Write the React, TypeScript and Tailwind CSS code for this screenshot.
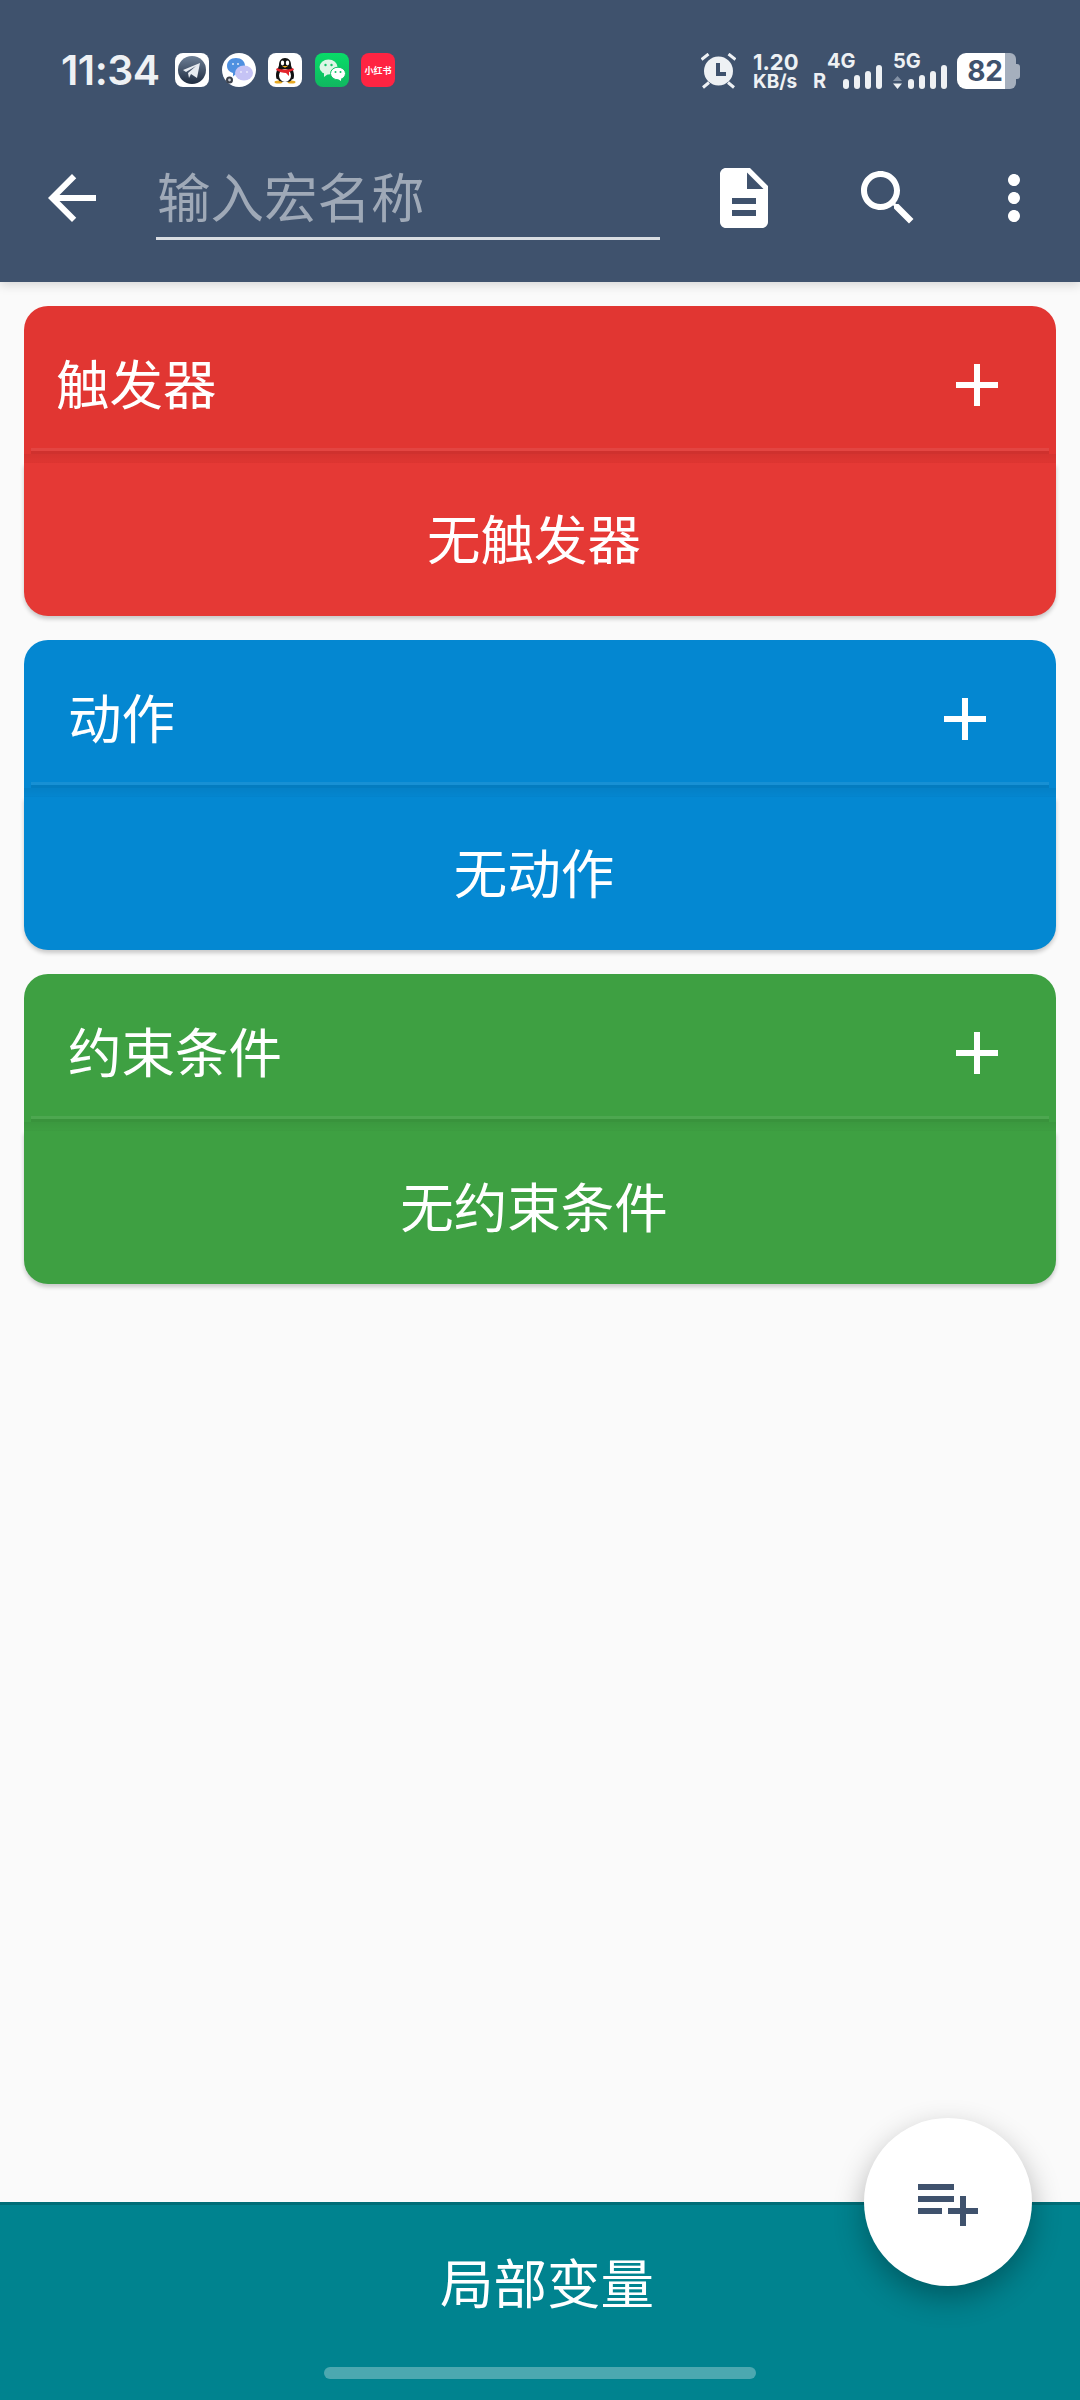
const sections = [
  {
    title: "触发器",
    empty: "无触发器",
    head: "bg-[#e13632]",
    body: "bg-[#e53935]",
    pad: "pl-[32px] pr-[43px]",
  },
  {
    title: "动作",
    empty: "无动作",
    head: "bg-[#0487d1]",
    body: "bg-[#0488d2]",
    pad: "pl-[44px] pr-[55px]",
  },
  {
    title: "约束条件",
    empty: "无约束条件",
    head: "bg-[#3ea042]",
    body: "bg-[#3ea042]",
    pad: "pl-[44px] pr-[43px]",
  },
];

function MaterialIcon({ d, className }: { d: string; className?: string }) {
  return (
    <svg viewBox="0 0 24 24" className={`w-[72px] h-[72px] shrink-0 ${className ?? "fill-white"}`}>
      <path d={d} />
    </svg>
  );
}

function TelegramIcon() {
  return (
    <svg viewBox="0 0 34 34" className="w-[34px] h-[34px]">
      <defs>
        <linearGradient id="tg" x1="0" y1="0" x2="0" y2="1">
          <stop offset="0" stopColor="#6d7f96" />
          <stop offset="1" stopColor="#1f2c40" />
        </linearGradient>
      </defs>
      <rect width="34" height="34" rx="8" fill="#fff" />
      <circle cx="17" cy="17" r="14" fill="url(#tg)" />
      <path d="M8 17 25 10 22 25 16 21 14 25 13 20 21 13 11 19Z" fill="#e8ecf1" />
    </svg>
  );
}

function ChatIcon() {
  return (
    <svg viewBox="0 0 34 34" className="w-[34px] h-[34px]">
      <circle cx="17" cy="17" r="17" fill="#fff" />
      <path d="M14 5c5.500 0 9 3.500 9 8s-3.500 8-9 8l-3 2.500V20c-3.500-1-6-3.500-6-7 0-4.500 3.500-8 9-8Z" fill="#4f90e0" />
      <circle cx="11" cy="11" r="1" fill="#dbe8fa" />
      <circle cx="16" cy="11" r="1" fill="#dbe8fa" />
      <ellipse cx="22" cy="20" rx="9" ry="7.500" fill="#c5c3f5" />
      <circle cx="19" cy="19" r="0.900" fill="#eeedfd" />
      <circle cx="25" cy="19" r="0.900" fill="#eeedfd" />
      <circle cx="7.500" cy="27" r="3.500" fill="#3a3f4a" />
      <circle cx="7.500" cy="27" r="1.400" fill="#c9ccd2" />
    </svg>
  );
}

function QQIcon() {
  return (
    <svg viewBox="0 0 34 34" className="w-[34px] h-[34px]">
      <rect width="34" height="34" rx="8" fill="#fff" />
      <ellipse cx="10.500" cy="29" rx="4" ry="1.600" fill="#e8a921" />
      <ellipse cx="23.500" cy="29" rx="4" ry="1.600" fill="#e8a921" />
      <path d="M17 5c4 0 6 3 6 7 0 2 3 6 3 10 0 4-1 5-2 4-1 3-4 3-7 3s-6 0-7-3c-1 1-2 0-2-4 0-4 3-8 3-10 0-4 2-7 6-7Z" fill="#111" />
      <ellipse cx="17" cy="22.500" rx="6" ry="6.500" fill="#fff" />
      <path d="M9 15c5 2 11 2 16 0l1 2-5 2v4l-3-3c-3 0-7-1-10-3Z" fill="#e3242b" />
      <ellipse cx="14.500" cy="10" rx="1.700" ry="2.400" fill="#fff" />
      <ellipse cx="19.500" cy="10" rx="1.700" ry="2.400" fill="#fff" />
      <path d="M14 13h6l-3 1.800Z" fill="#f2b322" />
    </svg>
  );
}

function WeChatIcon() {
  return (
    <svg viewBox="0 0 34 34" className="w-[34px] h-[34px]">
      <defs>
        <linearGradient id="wx" x1="0" y1="0" x2="0" y2="1">
          <stop offset="0" stopColor="#08dc68" />
          <stop offset="1" stopColor="#10b860" />
        </linearGradient>
      </defs>
      <rect width="34" height="34" rx="8" fill="url(#wx)" />
      <ellipse cx="13.500" cy="14" rx="9" ry="7.500" fill="#dff5e6" />
      <path d="M9 19v5l4-3Z" fill="#dff5e6" />
      <ellipse cx="23" cy="20.500" rx="7.500" ry="6.300" fill="#fff" stroke="#12c466" strokeWidth="1" />
      <path d="M26 25v3l-3-2Z" fill="#fff" />
      <circle cx="10.500" cy="12" r="1.200" fill="#12c466" />
      <circle cx="16.500" cy="12" r="1.200" fill="#12c466" />
      <circle cx="20.500" cy="19" r="1" fill="#12c466" />
      <circle cx="25.500" cy="19" r="1" fill="#12c466" />
    </svg>
  );
}

function AlarmIcon() {
  return (
    <svg viewBox="0 0 35 36" className="w-[35px] h-[36px] fill-[#eef1f4] stroke-[#eef1f4]">
      <circle cx="17.500" cy="18" r="14.500" stroke="none" />
      <path d="M0.500 6.500 7.500 1M34.500 6.500 27.500 1M2 34.500 8 29.500M33 34.500 27 29.500" fill="none" strokeWidth="3" />
      <path d="M17 10v11h8" fill="none" className="stroke-[#3f526d]" strokeWidth="4" />
    </svg>
  );
}

function SignalBars() {
  return (
    <div className="flex items-end gap-[5px] h-[25px]">
      <div className="w-[6px] h-[10px] rounded-[3px] bg-[#eef1f4]" />
      <div className="w-[6px] h-[14px] rounded-[3px] bg-[#eef1f4]" />
      <div className="w-[6px] h-[18px] rounded-[3px] bg-[#eef1f4]" />
      <div className="w-[6px] h-[24px] rounded-[3px] bg-[#eef1f4]" />
    </div>
  );
}

function StatusBar() {
  return (
    <div className="h-[114px] pt-[53px] pl-[61px] pr-[60px] flex items-start justify-between text-[#eef1f4] font-['Inter',sans-serif]">
      <div className="flex items-center h-[34px]">
        <span className="text-[41px] leading-[34px] font-semibold w-[114px] tracking-[-0.5px]">11:34</span>
        <div className="flex gap-[12.500px]">
          <TelegramIcon />
          <ChatIcon />
          <QQIcon />
          <WeChatIcon />
          <div className="w-[34px] h-[34px] rounded-[8px] bg-[#ff2442] flex items-center justify-center text-white text-[9px] leading-none font-bold whitespace-nowrap font-['Noto_Sans_CJK_SC',sans-serif]">
            小红书
          </div>
        </div>
      </div>
      <div className="flex items-start h-[36px]">
        <AlarmIcon />
        <div className="ml-[17px] w-[45px] flex flex-col">
          <span className="text-[22px] leading-[18px] font-bold">1.20</span>
          <span className="text-[19px] leading-[18px] font-bold mt-[2px] whitespace-nowrap">KB/s</span>
        </div>
        <div className="ml-[15px] w-[69px] flex flex-col">
          <span className="pl-[14px] text-[20px] leading-[16px] font-bold h-[11px]">4G</span>
          <div className="flex items-end justify-between">
            <span className="text-[20px] leading-[16px] font-bold">R</span>
            <SignalBars />
          </div>
        </div>
        <div className="ml-[11px] w-[54px] flex flex-col">
          <span className="text-[20px] leading-[16px] font-bold h-[11px]">5G</span>
          <div className="flex items-end justify-between">
            <svg viewBox="0 0 9 13" className="w-[9px] h-[13px]">
              <path d="M4.500 0 9 5H0Z" fill="#8593a6" />
              <path d="M0 7.500H9L4.500 13Z" fill="#eef1f4" />
            </svg>
            <SignalBars />
          </div>
        </div>
        <div className="ml-[10px] flex items-center h-[36px]">
          <div className="w-[48px] h-[36px] rounded-l-[9px] bg-white flex items-center justify-end pr-[2px] text-[#3f526d] text-[28px] leading-none font-bold">
            82
          </div>
          <div className="w-[11px] h-[36px] rounded-r-[6px] bg-[#a5afbd]" />
          <div className="w-[4px] h-[15px] rounded-r-[3px] bg-[#a5afbd]" />
        </div>
      </div>
    </div>
  );
}

function Toolbar() {
  return (
    <div className="h-[168px] flex items-center pl-[36px]">
      <MaterialIcon d="M20 11H7.830l5.590-5.590L12 4l-8 8 8 8 1.410-1.410L7.830 13H20v-2z" />
      <div className="ml-[48px] w-[504px] h-[81px] mt-[2px] border-b-[3px] border-[#d9dde2] pl-[1px] pb-[6px] flex items-center text-[53.500px] leading-none text-[#9fa9b7]">
        输入宏名称
      </div>
      <MaterialIcon
        className="ml-[48px] fill-white"
        d="M14 2H6c-1.100 0-2 .9-2 2v16c0 1.100.9 2 2 2h12c1.100 0 2-.9 2-2V8l-6-6zm2 16H8v-2h8v2zm0-4H8v-2h8v2zm-3-5V3.500L18.500 9H13z"
      />
      <MaterialIcon
        className="ml-[72px] fill-white"
        d="M15.500 14h-.79l-.28-.27C15.410 12.590 16 11.110 16 9.500 16 5.910 13.090 3 9.500 3S3 5.910 3 9.500 5.910 16 9.500 16c1.610 0 3.090-.59 4.230-1.570l.27.280v.790l5 4.990L20.490 19l-4.990-5zm-6 0C7.010 14 5 11.990 5 9.500S7.010 5 9.500 5 14 7.010 14 9.500 11.990 14 9.500 14z"
      />
      <MaterialIcon
        className="ml-[54px] fill-white"
        d="M12 8c1.100 0 2-.9 2-2s-.9-2-2-2-2 .9-2 2 .9 2 2 2zm0 2c-1.100 0-2 .9-2 2s.9 2 2 2 2-.9 2-2-.9-2-2-2zm0 6c-1.100 0-2 .9-2 2s.9 2 2 2 2-.9 2-2-.9-2-2-2z"
      />
    </div>
  );
}

function SectionCard({ section }: { section: (typeof sections)[number] }) {
  return (
    <div className="h-[310px] flex flex-col text-white text-[53.500px] leading-none">
      <div className={`rounded-t-[24px] ${section.head}`}>
        <div className={`h-[142px] pt-[16px] flex items-center justify-between ${section.pad}`}>
          <span className="mb-[6px]">{section.title}</span>
          <MaterialIcon d="M19 13h-6v6h-2v-6H5v-2h6V5h2v6h6v2z" />
        </div>
        <div className="mx-[7px] h-[3px] bg-white/8" />
        <div className="mx-[7px] h-[3px] bg-black/8" />
        <div className="h-[9px] bg-gradient-to-b from-black/5 to-black/1" />
      </div>
      <div className={`flex-1 rounded-b-[24px] flex items-center justify-center pr-[12px] pb-[6px] shadow-[0_3px_4px_rgba(0,0,0,0.2)] ${section.body}`}>
        {section.empty}
      </div>
    </div>
  );
}

export default function App() {
  return (
    <div className="relative w-[1080px] h-[2400px] overflow-hidden flex flex-col bg-[#fafafa] font-['Noto_Sans_CJK_SC','Noto_Sans',sans-serif]">
      <header className="relative z-10 bg-[#3f526d] shadow-[0_3px_10px_rgba(0,0,0,0.15)]">
        <StatusBar />
        <Toolbar />
      </header>

      <main className="flex-1 px-[24px] pt-[24px] flex flex-col gap-[24px]">
        {sections.map((section) => (
          <SectionCard key={section.title} section={section} />
        ))}
      </main>

      <footer className="h-[198px] bg-[#00838f] border-t-[3px] border-[#006d77] text-white">
        <div className="h-[152px] flex items-center justify-center pl-[14px] text-[53.500px] leading-none">局部变量</div>
      </footer>

      <button className="absolute right-[48px] bottom-[114px] w-[168px] h-[168px] rounded-full bg-white flex items-center justify-center shadow-[0_12px_30px_rgba(0,0,0,0.3)]">
        <MaterialIcon
          className="fill-[#3f526d]"
          d="M14 10H2v2h12v-2zm0-4H2v2h12V6zm4 8v-4h-2v4h-4v2h4v4h2v-4h4v-2h-4zM2 16h8v-2H2v2z"
        />
      </button>

      <div className="absolute left-[324px] bottom-[21px] w-[432px] h-[12px] rounded-full bg-[#4ca8b0]" />
    </div>
  );
}
